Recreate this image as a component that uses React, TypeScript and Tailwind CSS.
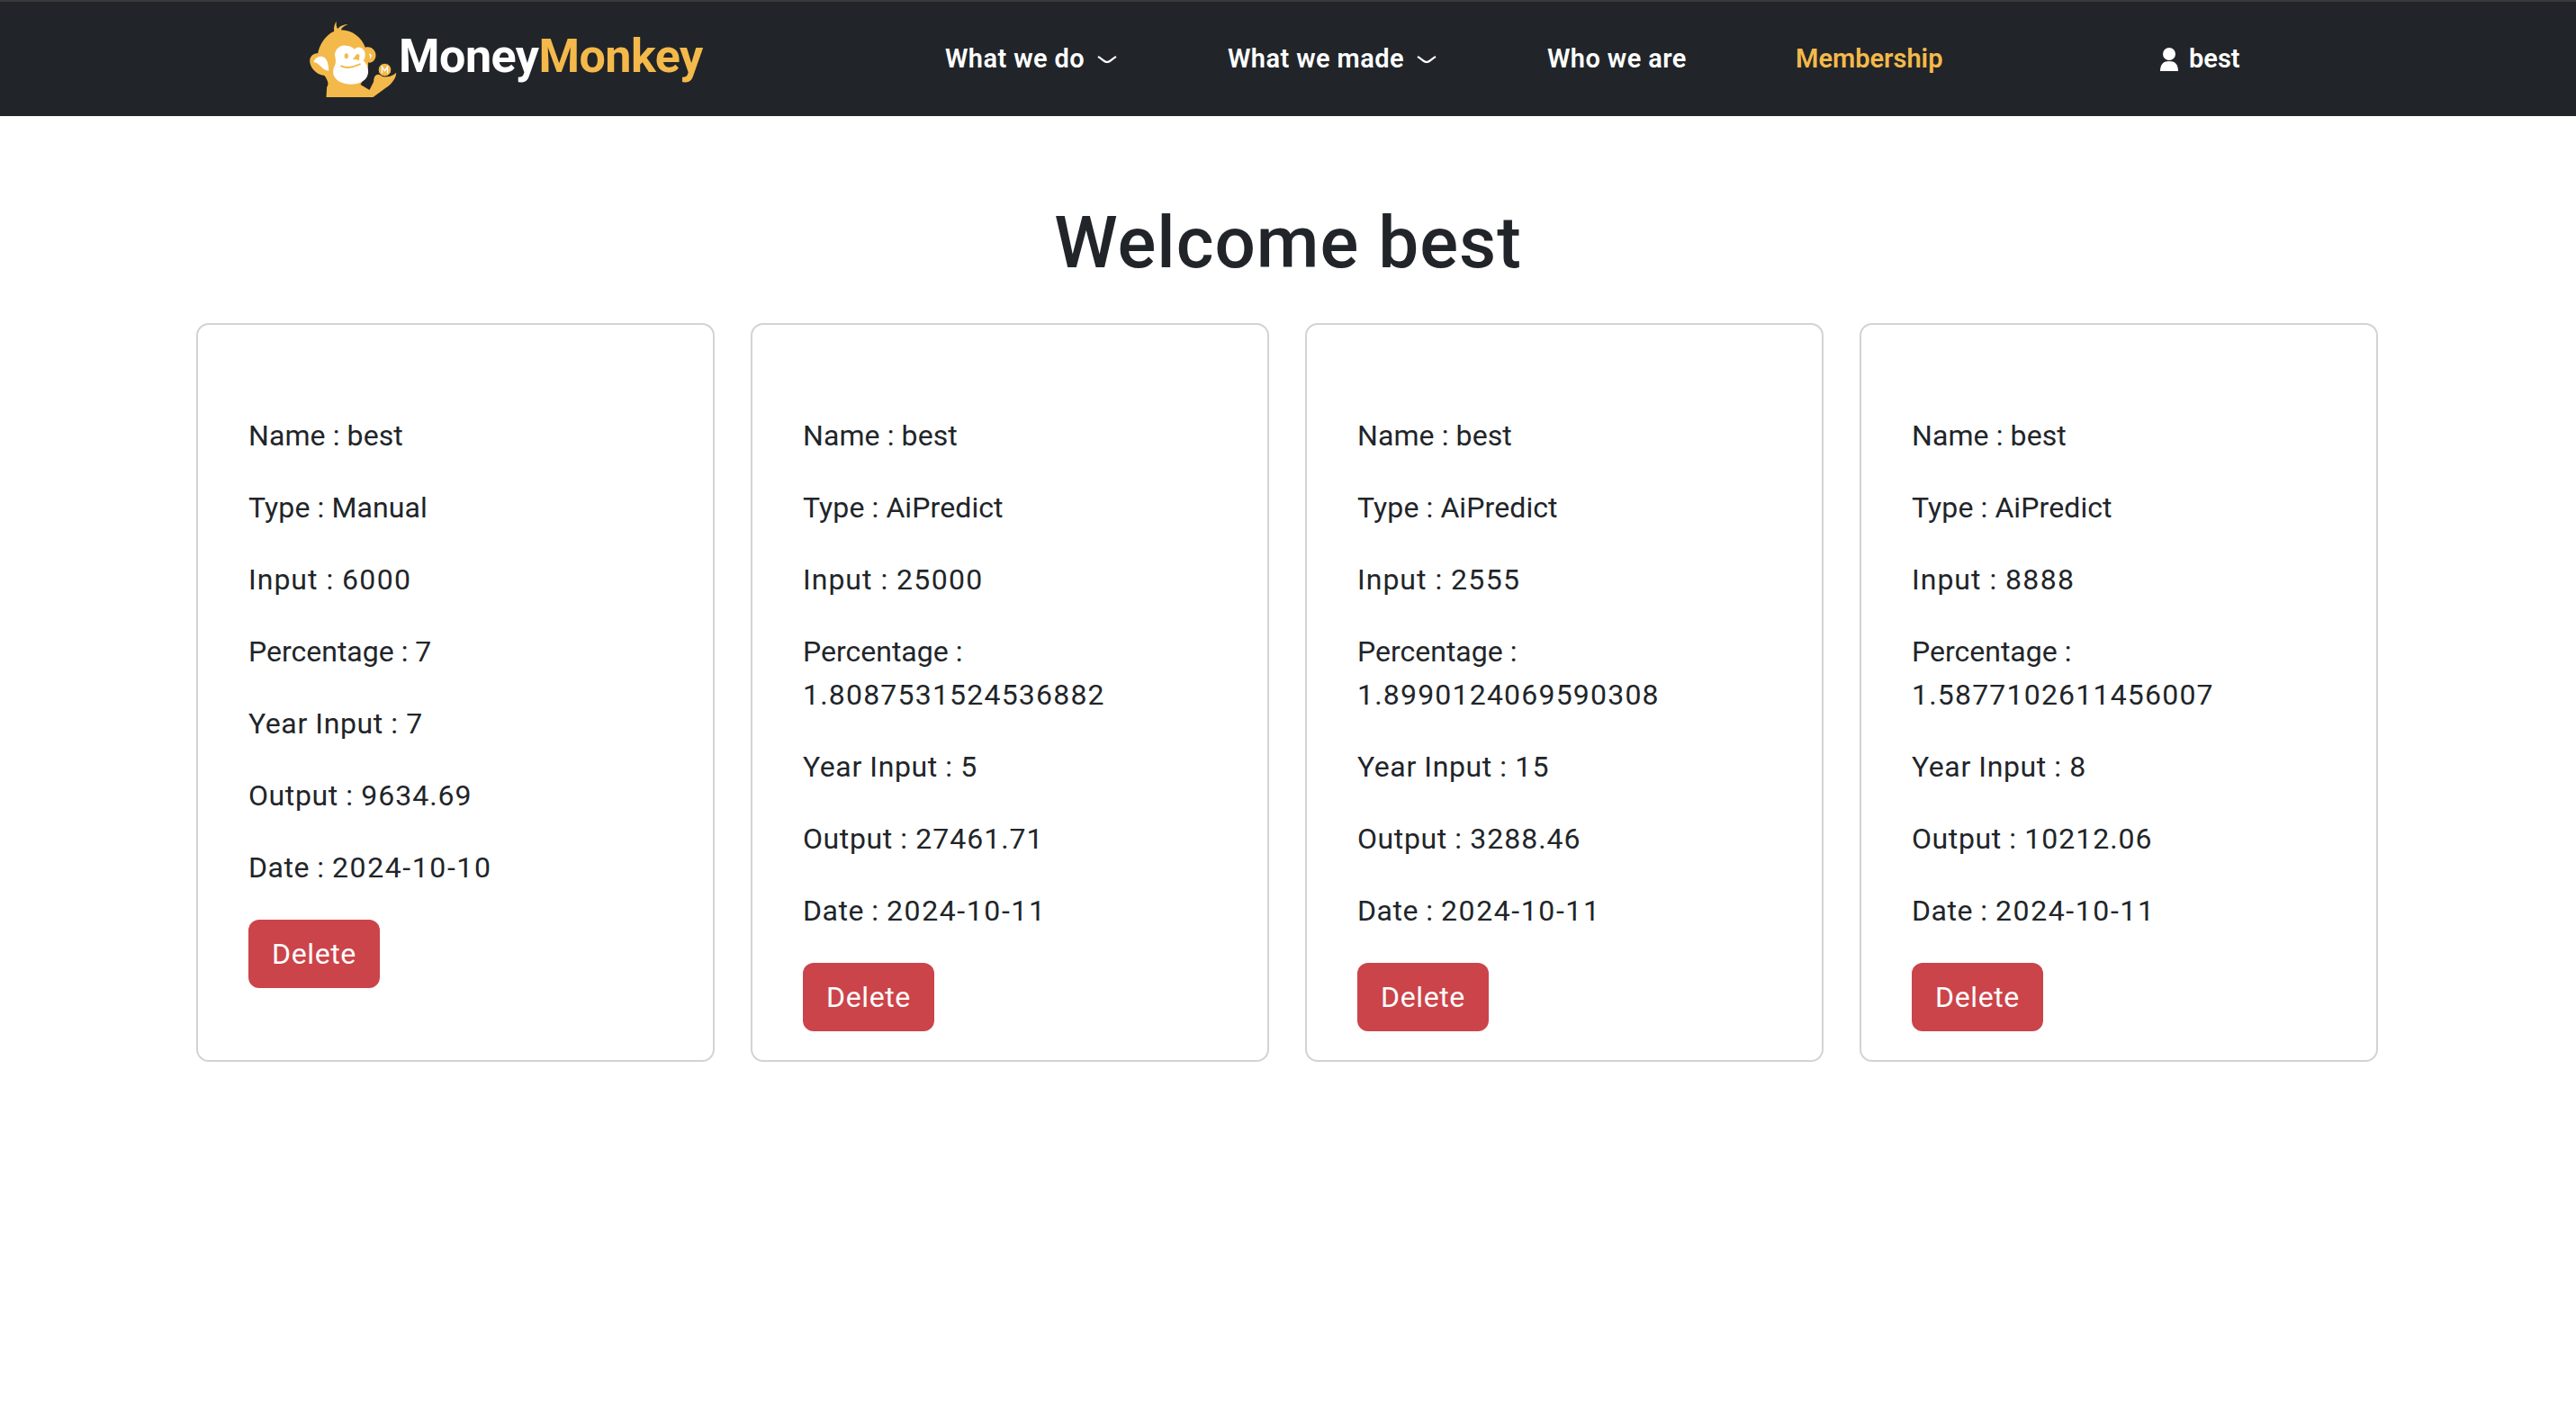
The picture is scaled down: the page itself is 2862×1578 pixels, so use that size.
const cards = [
  { type: "Manual", input: "6000", pct: "7", year: "7", out: "9634.69", date: "2024-10-10" },
  { type: "AiPredict", input: "25000", pct: "1.8087531524536882", year: "5", out: "27461.71", date: "2024-10-11" },
  { type: "AiPredict", input: "2555", pct: "1.8990124069590308", year: "15", out: "3288.46", date: "2024-10-11" },
  { type: "AiPredict", input: "8888", pct: "1.5877102611456007", year: "8", out: "10212.06", date: "2024-10-11" },
];

function Monkey() {
  return (
    <svg viewBox="24 20 296 264" className="w-[99px] h-[88px] shrink-0">
      <path fill="#f4b94b" d="M108 58 C106 44 110 32 116 25 C114 36 116 44 120 50 C126 42 140 34 155 36 C142 40 134 46 131 54 C170 54 200 80 212 112 C232 106 248 122 247 140 C246 156 232 166 222 162 C222 186 214 208 196 236 L226 254 L240 226 C240 206 250 198 262 204 C282 214 300 210 315 196 C316 214 298 236 282 246 L238 278 L82 278 L84 244 C90 236 90 226 76 206 C46 204 26 176 27 156 C28 138 44 130 54 132 C58 108 76 72 108 58 Z" />
      <path fill="#fff" d="M40 160 C44 146 62 136 76 146 C86 154 90 172 90 190 C72 190 62 170 50 164 C46 162 42 162 40 160 Z" />
      <path fill="#fff" d="M112 146 C106 124 124 104 146 106 C160 106 170 112 176 118 C186 108 200 110 208 122 C214 134 212 146 206 156 C222 172 228 198 214 216 C196 238 154 240 126 226 C104 214 100 192 110 174 C114 166 114 156 112 146 Z" />
      <ellipse cx="149" cy="141" rx="6.5" ry="9" fill="#f4b94b" />
      <path fill="#f4b94b" d="M170 152 L182 136 C188 130 196 138 192 146 L192 156 L180 152 Z" />
      <path fill="none" stroke="#f4b94b" strokeWidth="6" strokeLinecap="round" d="M132 174 C150 184 176 176 194 168" />
      <path fill="#f4b94b" d="M219 130 C224 124 236 124 238 134 C240 146 232 154 226 156 C228 146 226 138 219 130 Z" />
      <path fill="#fff" d="M224 134 C230 132 234 136 232 142 C231 146 230 148 228 150 C228 144 228 138 224 134 Z" />
      <circle cx="277" cy="187" r="22" fill="#f4b94b" stroke="#212529" strokeWidth="3" />
      <path fill="none" stroke="#fff" strokeWidth="4" d="M268 198 V177 L277 190 L286 177 V198" />
    </svg>
  );
}

function Chevron() {
  return (
    <svg viewBox="0 0 22 9" className="w-[22px] h-[9px] ml-[14px] mt-[2px]" fill="none" stroke="#fff" strokeWidth="2.2">
      <path d="M1 1 C5 3 8 7 11 7 C14 7 17 3 21 1" />
    </svg>
  );
}

export default function App() {
  return (
    <div className="min-h-[1578px] bg-white font-['Roboto','Liberation_Sans',sans-serif] text-[#212529]">
      <nav className="h-[129px] bg-[#212529] border-t-2 border-[#3a3a3a] flex items-center text-white text-[29px] font-semibold">
        <div className="w-[1050px] pl-[343px] flex items-center shrink-0">
          <Monkey />
          <span className="ml-[1px] mb-[5px] text-[52px] tracking-[-0.5px] font-bold leading-none">Money<span className="text-[#f4b94b]">Monkey</span></span>
        </div>
        <a className="flex items-center w-[314px] tracking-[0.4px]">What we do<Chevron /></a>
        <a className="flex items-center w-[355px] tracking-[0.4px]">What we made<Chevron /></a>
        <a className="w-[276px] tracking-[0.4px]">Who we are</a>
        <a className="w-[405px] text-[#f4b94b]">Membership</a>
        <a className="flex items-center gap-[12px]">
          <svg viewBox="0 0 20 26" className="w-[20px] h-[26px]" fill="#fff">
            <circle cx="10" cy="7" r="7" />
            <path d="M0 26 C0 18 4 15 10 15 C16 15 20 18 20 26 Z" />
          </svg>
          best
        </a>
      </nav>
      <h1 className="mt-[93px] mb-[41px] text-center text-[80px] leading-[96px] font-medium tracking-[1px]">Welcome best</h1>
      <div className="ml-[218px] mr-[220px] grid grid-cols-4 gap-[40px] items-stretch">
        {cards.map((c, i) => (
          <div key={i} className="h-[821px] border-2 border-[#d3d3d3] rounded-[14px] pt-[99px] pl-[56px] pr-[56px] text-[32px] leading-[48px]">
            <p className="mb-[32px] tracking-[0.1px]">Name : best</p>
            <p className="mb-[32px] tracking-[0.1px]">Type : {c.type}</p>
            <p className="mb-[32px]"><span className="tracking-[1px]">Input : </span><span className="tracking-[1.3px]">{c.input}</span></p>
            <p className="mb-[32px]">Percentage : <span className="tracking-[1.2px]">{c.pct}</span></p>
            <p className="mb-[32px]"><span className="tracking-[0.6px]">Year Input : </span><span className="tracking-[1.2px]">{c.year}</span></p>
            <p className="mb-[32px]"><span className="tracking-[0.6px]">Output : </span><span className="tracking-[1px]">{c.out}</span></p>
            <p className="mb-[32px]"><span className="tracking-[0.5px]">Date : </span><span className="tracking-[1.6px]">{c.date}</span></p>
            <button className="mt-[2px] w-[146px] h-[76px] bg-[#cb444a] text-white rounded-[12px] text-[32px] tracking-[0.6px]">Delete</button>
          </div>
        ))}
      </div>
    </div>
  );
}
